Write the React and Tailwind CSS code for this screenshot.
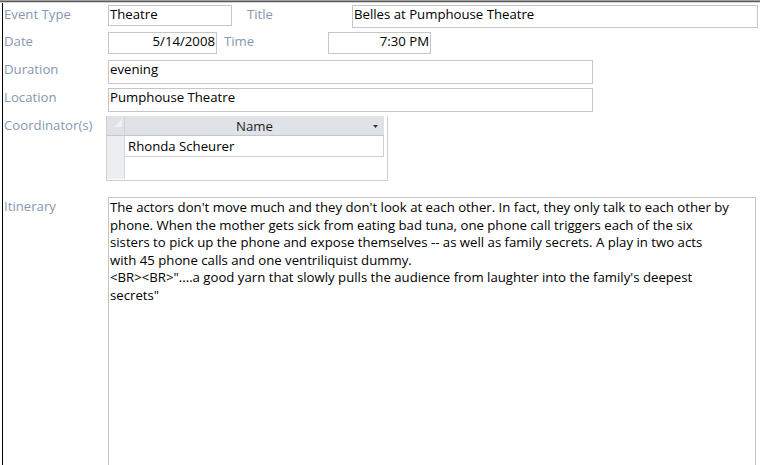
import React from 'react';

const lines = [
  "The actors don't move much and they don't look at each other. In fact, they only talk to each other by",
  'phone. When the mother gets sick from eating bad tuna, one phone call triggers each of the six',
  'sisters to pick up the phone and expose themselves -- as well as family secrets. A play in two acts',
  'with 45 phone calls and one ventriliquist dummy.',
  '<BR><BR>"....a good yarn that slowly pulls the audience from laughter into the family\'s deepest',
  'secrets"',
];

function Label({ children, className = '' }) {
  return (
    <div className={'shrink-0 pt-[1px] leading-[16px] text-[#8698b1] whitespace-nowrap ' + className}>
      {children}
    </div>
  );
}

function Box({ children, className = '' }) {
  return (
    <div className={'shrink-0 border border-[#c6c6c6] px-[1px] leading-[16px] whitespace-nowrap ' + className}>
      {children}
    </div>
  );
}

export default function App() {
  return (
    <div className="w-[760px] h-[465px] overflow-hidden bg-white text-black font-['Open_Sans',sans-serif] text-[13.2px]">
      {/* top edge */}
      <div className="h-[1px] bg-[#a0a0a0]" />
      <div className="h-[1px] bg-[#5c5c5c]" />
      <div className="h-[1px] bg-[#d4d4d4]" />

      <div className="ml-[2px] h-[462px] border-l border-black pl-[1px]">
        {/* Event type / title */}
        <div className="flex items-start pt-[2px]">
          <Label className="w-[104px]">Event Type</Label>
          <Box className="w-[124px] h-[21px]">Theatre</Box>
          <Label className="ml-[15px] w-[105px]">Title</Label>
          <Box className="w-[406px] h-[23px]">Belles at Pumphouse Theatre</Box>
        </div>

        {/* Date / time */}
        <div className="flex items-start mt-[4px]">
          <Label className="w-[104px]">Date</Label>
          <Box className="w-[109px] h-[22px] text-right">5/14/2008</Box>
          <Label className="ml-[7px] w-[104px]">Time</Label>
          <Box className="w-[103px] h-[22px] text-right">7:30 PM</Box>
        </div>

        <div className="flex items-start mt-[6px]">
          <Label className="w-[104px]">Duration</Label>
          <Box className="w-[485px] h-[24px]">evening</Box>
        </div>

        <div className="flex items-start mt-[4px]">
          <Label className="w-[104px]">Location</Label>
          <Box className="w-[485px] h-[24px]">Pumphouse Theatre</Box>
        </div>

        {/* Coordinators sub grid */}
        <div className="flex items-start mt-[4px]">
          <Label className="w-[102px]">Coordinator(s)</Label>
          <div className="w-[282px] h-[65px] border-l border-r border-b border-[#cfcfcf] pr-[3px]">
            <div className="flex h-[20px] bg-[#dfe2e7] border-b border-[#c4c8ce]">
              <div className="w-[18px] border-r border-[#d0d3d8] flex justify-end items-start pt-[3px] pr-[2px]">
                <svg width="8" height="8" viewBox="0 0 8 8">
                  <path d="M8 0 L8 8 L0 8 Z" fill="#eef0f3" />
                </svg>
              </div>
              <div className="flex-1 relative text-center pt-[2px] leading-[16px] text-[#1e1e1e]">
                Name
                <svg className="absolute right-[6px] top-[9px]" width="5" height="3" viewBox="0 0 5 3">
                  <path d="M0 0 L5 0 L2.5 3 Z" fill="#333" />
                </svg>
              </div>
            </div>
            <div className="flex h-[21px]">
              <div className="w-[18px] bg-[#eceef2] border-r border-[#d6d8dc]" />
              <div className="flex-1 border-b border-r border-[#d0d0d0] pl-[3px] pt-[2px] leading-[16px]">
                Rhonda Scheurer
              </div>
            </div>
            <div className="flex h-[22px]">
              <div className="w-[18px] bg-[#eceef2] border-r border-[#d6d8dc]" />
              <div className="flex-1" />
            </div>
          </div>
        </div>

        {/* Itinerary */}
        <div className="flex items-start mt-[16px]">
          <div className="w-[104px] shrink-0 pt-[1px] leading-[17.6px] text-[#8698b1]">Itinerary</div>
          <div className="w-[648px] h-[300px] border border-[#c6c6c6] pl-[1px] pt-[1px] leading-[17.6px]">
            {lines.map((l, i) => (
              <div key={i} className="whitespace-nowrap">{l}</div>
            ))}
          </div>
        </div>
      </div>
    </div>
  );
}
